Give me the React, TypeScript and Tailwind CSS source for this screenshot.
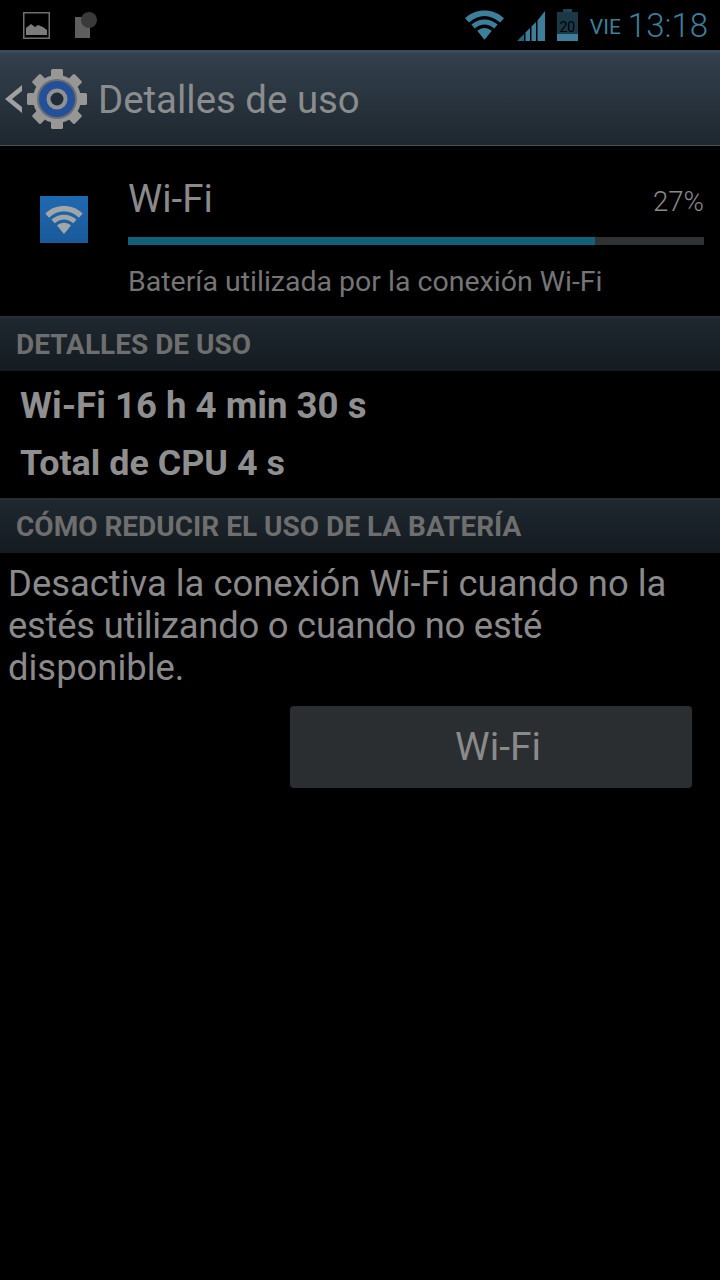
const font = "font-['Roboto',sans-serif]"

function WifiArcs({ color, dot }: { color: string; dot?: string }) {
  return (
    <svg viewBox="0 0 40 30" className="block h-full w-full">
      <path d="M0 8 C11 -2.5 29 -2.5 40 8 L36 12.5 C26 3.5 14 3.5 4 12.5 Z" fill={color} />
      <path d="M6.5 14.5 C14.5 7.5 25.5 7.5 33.5 14.5 L30 18.5 C23.5 13 16.5 13 10 18.5 Z" fill={color} />
      <path d="M12.5 21 C17 17 23 17 27.5 21 L20 30 Z" fill={dot || color} />
    </svg>
  )
}

function StatusBar() {
  return (
    <div className="flex h-[50px] items-center bg-black pl-[23px] pr-[12px]">
      <svg viewBox="0 0 27 27" className="h-[27px] w-[27px]">
        <rect x="0.75" y="0.75" width="25.5" height="25.5" fill="none" stroke="#6f6f6f" strokeWidth="1.5" />
        <path d="M3 23 L3 16 L8 12 L12 15 L15 13 L20 15 L24 18 L24 23 Z" fill="#7b7b7b" />
      </svg>
      <svg viewBox="0 0 24 27" className="ml-[24px] h-[27px] w-[24px]">
        <path d="M1 5 H16 V26 H1 Z" fill="#5f5e5c" />
        <circle cx="15" cy="8" r="8" fill="#3a3a3a" />
      </svg>
      <div className="ml-auto h-[30px] w-[39px]">
        <WifiArcs color="#3d7f9b" />
      </div>
      <svg viewBox="0 0 28 32" className="ml-[13px] h-[32px] w-[28px]">
        <path d="M0 32 L7 25 V32 Z" fill="#2b6279" />
        <path d="M8.5 23.5 L13 19 V32 H8.5 Z" fill="#3d7f9b" />
        <path d="M14.5 17.5 L19 13 V32 H14.5 Z" fill="#3d7f9b" />
        <path d="M20.5 11.5 L28 2 V32 H20.5 Z" fill="#3d7f9b" />
      </svg>
      <div className="relative ml-[12px] h-[32px] w-[21px]">
        <div className="absolute left-[6px] top-0 h-[3px] w-[9px] bg-[#1f4454]" />
        <div className="absolute inset-x-0 bottom-0 top-[3px] bg-[#1a3845]" />
        <div className="absolute inset-x-0 bottom-0 h-[7px] bg-[#3d7f9b]" />
        <span className={`absolute inset-x-0 top-[11px] text-center text-[14px] leading-[14px] text-black ${font}`}>20</span>
      </div>
      <span className={`ml-[12px] mt-[4px] text-[21px] leading-none text-[#3d7f9b] ${font}`}>VIE</span>
      <span className={`ml-[7px] text-[33px] font-light leading-none text-[#3d7f9b] ${font}`}>13:18</span>
    </div>
  )
}

function Gear() {
  const teeth = [0, 45, 90, 135, 180, 225, 270, 315]
  return (
    <svg viewBox="0 0 60 62" className="h-[62px] w-[60px]">
      {teeth.map((a) => (
        <rect key={a} x="24" y="1" width="12" height="12" rx="1.5" fill="#979795" transform={`rotate(${a} 30 31)`} />
      ))}
      <circle cx="30" cy="31" r="24" fill="#979795" />
      <circle cx="30" cy="31" r="20" fill="#6a6d72" />
      <circle cx="30" cy="31" r="18" fill="#24509a" />
      <circle cx="30" cy="31" r="10.5" fill="#8f9193" />
      <circle cx="30" cy="31" r="6.5" fill="#1f2c3a" />
    </svg>
  )
}

function SectionHeader({ label, h }: { label: string; h: string }) {
  return (
    <div className={`flex items-center border-t-2 border-[#262d33] bg-gradient-to-b from-[#1f282f] to-[#141b21] pl-[16px] ${h}`}>
      <span className={`text-[28px] font-bold leading-none text-[#6e6e6e] ${font}`}>{label}</span>
    </div>
  )
}

export default function App() {
  return (
    <div className={`h-[1280px] w-[720px] overflow-hidden bg-black ${font}`}>
      <StatusBar />

      <div className="flex h-[96px] items-center border-y border-t-[3px] border-b-[#4a5157] border-t-[#3b4a5a] bg-gradient-to-b from-[#33414d] to-[#1e272f] pl-[3px]">
        <svg viewBox="0 0 20 32" className="h-[32px] w-[20px]">
          <path d="M19 2 L2 16 L19 30 L19 24 L9 16 L19 8 Z" fill="#a0a0a0" />
        </svg>
        <div className="ml-[4px]"><Gear /></div>
        <span className="ml-[11px] mt-[2px] text-[38.4px] leading-none text-[#8a8c8e]">Detalles de uso</span>
      </div>

      <div className="flex h-[170px]">
        <div className="ml-[40px] mt-[50px] h-[47px] w-[48px] bg-gradient-to-b from-[#1f69b2] to-[#1a5a99] px-[5px] pt-[10px]">
          <div className="mx-auto h-[28px] w-[38px]"><WifiArcs color="#a3a6a8" /></div>
        </div>
        <div className="ml-[40px] w-[576px] pt-[32px]">
          <div className="flex items-start justify-between">
            <span className="text-[38.6px] leading-[42px] text-[#8a8a8a]">Wi-Fi</span>
            <span className="mt-[9px] text-[27.6px] font-light leading-[30px] text-[#8a8a8a]">27%</span>
          </div>
          <div className="mt-[17px] h-[8px] bg-[#2e3234]">
            <div className="h-full w-[81%] bg-[#12617a]" />
          </div>
          <p className="mt-[21px] text-[28.5px] leading-[32px] text-[#757575]">Batería utilizada por la conexión Wi-Fi</p>
        </div>
      </div>

      <SectionHeader label="DETALLES DE USO" h="h-[55px]" />

      <div className="flex h-[127px] flex-col pl-[20px] pt-[14px] font-bold leading-[42px] text-[#8f8f8f]">
        <span className="text-[36.6px]">Wi-Fi 16 h 4 min 30 s</span>
        <span className="mt-[15px] text-[35.9px]">Total de CPU 4 s</span>
      </div>

      <SectionHeader label="CÓMO REDUCIR EL USO DE LA BATERÍA" h="h-[55px]" />

      <p className="px-[8px] pt-[10px] text-[36.4px] leading-[42px] text-[#8a8a8a]">
        Desactiva la conexión Wi-Fi cuando no la <span className="tracking-[-0.24px]">estés utilizando o cuando no esté</span> disponible.
      </p>

      <div className="flex justify-end pr-[28px] pt-[17px]">
        <button className="flex h-[82px] w-[402px] items-center justify-center rounded-[4px] bg-[#2b2e31] pl-[14px] text-[39px] text-[#8a8a8a]">
          Wi-Fi
        </button>
      </div>
    </div>
  )
}
